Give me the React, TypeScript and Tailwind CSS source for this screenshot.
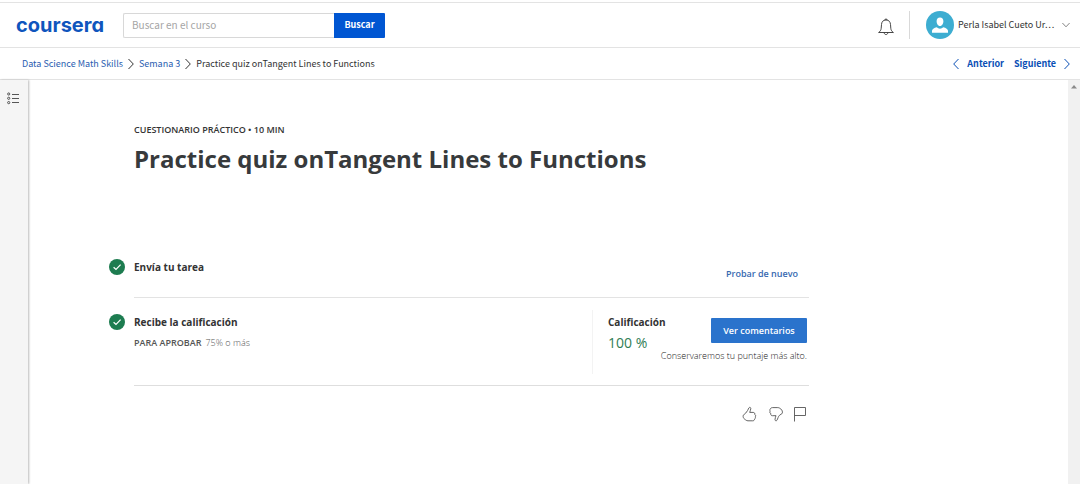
import type { ReactNode } from "react";

const sans = "font-['Open_Sans','Noto_Sans',sans-serif]";
const header = "font-['Noto_Sans_CJK_SC','Open_Sans',sans-serif]";

function Chevron({ className, flip = false }: { className: string; flip?: boolean }) {
  return (
    <svg viewBox="0 0 6 12" className={className} fill="none" stroke="currentColor" strokeWidth="1" aria-hidden="true">
      <path d={flip ? "M5.5 1 .7 6l4.8 5" : "M.5 1l4.8 5L.5 11"} />
    </svg>
  );
}

function CheckMark() {
  return (
    <svg viewBox="0 0 16 16" className="size-4 shrink-0" aria-label="Completado">
      <circle cx="8" cy="8" r="8" fill="#1d7c50" />
      <path d="M4.6 8.2l2.4 2.3 4.6-4.8" fill="none" stroke="#fff" strokeWidth="1.2" />
    </svg>
  );
}

function IconButton({ label, children }: { label: string; children: ReactNode }) {
  return (
    <button type="button" aria-label={label} className="text-[#555]">
      <svg viewBox="0 0 15 16" className="h-4 w-[15px]" fill="none" stroke="currentColor" strokeWidth="0.9" strokeLinejoin="round">
        {children}
      </svg>
    </button>
  );
}

function TopBar() {
  return (
    <header className={`mt-0.5 flex h-[46px] items-center border-y border-[#e3e3e3] pr-2.5 pl-4 ${header}`}>
      <a href="#inicio" className="w-[107px] font-['Inter',sans-serif] text-[20px] leading-6 font-bold text-[#0f55bd] [font-feature-settings:'cv11']">
        coursera
      </a>
      <form className="flex h-[25px]" onSubmit={(e) => e.preventDefault()}>
        <input
          type="text"
          aria-label="Buscar en el curso"
          placeholder="Buscar en el curso"
          className="w-[211px] rounded-l-[2px] border border-r-0 border-[#d8d8d8] px-2 text-[10px] leading-4 text-[#333] placeholder:text-[#a5a5a5]"
        />
        <button type="submit" className="w-[51px] rounded-r-[1px] bg-[#0056d2] text-[9px] leading-4 font-bold text-white">
          Buscar
        </button>
      </form>
      <div className="ml-auto flex items-center">
        <button type="button" aria-label="Notificaciones" className="mt-1 text-[#333]">
          <svg viewBox="0 0 16 18" className="h-[18px] w-4" fill="none" stroke="currentColor" strokeWidth="0.9" strokeLinejoin="round">
            <path d="M.6 14.5c1.5-1 2.4-2.3 2.6-4.2l.3-3.8C3.700 3.900 5 2 8 2s4.300 1.900 4.500 4.500l.3 3.800c.2 1.900 1.100 3.200 2.600 4.200z" />
            <path d="M6.800 2.100C6.800.6 9.200.6 9.200 2.100M6.200 14.600c0 2.600 3.600 2.600 3.600 0" />
          </svg>
        </button>
        <span className="ml-[15px] h-7 w-px bg-[#d9d9d9]" />
        <button type="button" className="ml-4 flex items-center text-[9px] leading-4 text-[#333]">
          <svg viewBox="0 0 28 28" className="size-7" aria-hidden="true">
            <circle cx="14" cy="14" r="14" fill="#3dadd1" />
            <path d="M14 6.500c2.200 0 3.400 1.500 3.400 3.700 0 2.300-1.400 4.800-3.400 4.800s-3.400-2.500-3.400-4.800c0-2.200 1.200-3.700 3.400-3.700zM6 21.800v-2c0-1.500 2-3 4.800-3.500.8.900 1.900 1.400 3.200 1.400s2.400-.5 3.200-1.400c2.800.5 4.800 2 4.800 3.500v2z" fill="#fff" />
          </svg>
          <span className="ml-1 w-[104px] text-left whitespace-nowrap">Perla Isabel Cueto Ur…</span>
          <svg viewBox="0 0 8 6" className="h-1.5 w-2" fill="none" stroke="#666" strokeWidth="0.8" aria-hidden="true">
            <path d="M.4 1L4 4.800 7.600 1" />
          </svg>
        </button>
      </div>
    </header>
  );
}

function Breadcrumbs() {
  return (
    <div className={`flex h-8 items-center justify-between border-b border-[#e3e3e3] pr-2.5 pl-[22px] text-[9px] leading-4 ${header}`}>
      <nav aria-label="Ruta" className="flex items-center gap-[5px] text-[#333]">
        <a href="#curso" className="text-[#2a5db0]">Data Science Math Skills</a>
        <Chevron className="h-3 w-1.5" />
        <a href="#semana-3" className="text-[#2a5db0]">Semana 3</a>
        <Chevron className="h-3 w-1.5" />
        <span>Practice quiz onTangent Lines to Functions</span>
      </nav>
      <nav aria-label="Lecciones" className="flex items-center gap-2.5 font-bold text-[#0a4fb5]">
        <a href="#anterior" className="flex items-center gap-2">
          <Chevron className="h-3 w-1.5" flip />
          Anterior
        </a>
        <a href="#siguiente" className="flex items-center gap-2">
          Siguiente
          <Chevron className="h-3 w-1.5" />
        </a>
      </nav>
    </div>
  );
}

function Sidebar() {
  return (
    <aside className="w-7 shrink-0 bg-[#f5f5f5] pt-3 pl-[7px] shadow-[1px_0_2px_#bbb]">
      <button type="button" aria-label="Contenido del curso" className="block text-[#444]">
        <svg viewBox="0 0 13 13" className="size-[13px]" fill="none" stroke="currentColor" strokeWidth="0.9">
          <circle cx="1.700" cy="2" r="1.100" />
          <circle cx="1.700" cy="6.300" r="1.100" />
          <circle cx="1.700" cy="10.600" r="1.100" />
          <path d="M5 2.500h7M5 6.500h7M5 10.500h7" />
        </svg>
      </button>
    </aside>
  );
}

function Quiz() {
  return (
    <main className="grow pt-11 pl-[81px] text-[#333]">
      <div className="w-full max-w-[700px]">
        <div className="pl-[25px]">
          <p className="text-[9px] leading-3 font-semibold">CUESTIONARIO PRÁCTICO • 10 MIN</p>
          <h1 className="mt-[7px] text-[24px] leading-8 font-bold text-[#373a3c]">Practice quiz onTangent Lines to Functions</h1>
        </div>

        <section className="mt-20 flex gap-[9px]">
          <div className="pt-1">
            <CheckMark />
          </div>
          <div className="flex h-[43px] grow justify-between border-b border-[#e3e3e3]">
            <h2 className="pt-1 text-[10px] leading-4 font-bold">Envía tu tarea</h2>
            <a href="#probar" className="mr-[11px] pt-[11px] text-[9px] leading-4 font-semibold text-[#3668b0]">Probar de nuevo</a>
          </div>
        </section>

        <section className="flex gap-[9px]">
          <div className="pt-4">
            <CheckMark />
          </div>
          <div className="flex h-[88px] grow border-b border-[#dedede]">
            <div className="grow pt-4">
              <h2 className="text-[10px] leading-4 font-bold">Recibe la calificación</h2>
              <p className="mt-[5px] flex gap-1 text-[9px] leading-4 text-[#555]">
                <span className="font-semibold">PARA APROBAR</span>
                <span className="font-light">75% o más</span>
              </p>
            </div>
            <div className="mt-3 flex h-16 w-[217px] shrink-0 justify-between border-l border-[#f3f3f3] pr-0.5 pl-[15px]">
              <div className="w-12 shrink-0 pt-1 whitespace-nowrap">
                <h3 className="text-[10px] leading-4 font-bold">Calificación</h3>
                <p className="mt-[3px] text-[14px] leading-5 text-[#2f7d55]">100 %</p>
              </div>
              <div className="flex flex-col items-end pt-2">
                <button type="button" className="h-[25px] w-24 rounded-[1px] bg-[#2a73cc] text-[9px] leading-4 font-semibold text-white">Ver comentarios</button>
                <p className="mt-[5px] text-[9px] leading-4 font-light whitespace-nowrap text-[#222]">Conservaremos tu puntaje más alto.</p>
              </div>
            </div>
          </div>
        </section>

        <div className="mt-5 flex justify-end gap-[11px]">
          <IconButton label="Me gusta">
            <path d="M1.200 9.300l2.600-2.300C5.300 5.700 6 3.400 6.900 1.900c.6-1 2-.5 1.900.6-.1 1.500-.7 2.600-1.100 3.900h3.500c1.300 0 1.900 1 1.400 1.900 1.200.5 1.400 1.800.6 2.600.5.900.1 1.800-.7 2.200 0 1.100-.7 1.700-1.800 1.700H6c-1.500 0-2.300-.9-3.300-1.600C1.300 12.300.900 10.700 1.200 9.300z" />
          </IconButton>
          <IconButton label="No me gusta">
            <path d="M2.200 3.100C2.700 2 3.600 1.600 4.600 1.600h5.200c1.500 0 2.200.9 3.300 1.600 1.200 1.100 1.500 2.600 1.200 4.100l-2.800 2C10.300 10.300 9.700 13 9 14.200c-.6 1-2 .6-2-.5 0-1.500.6-2.700 1-4H4.300c-1.300 0-1.800-1-1.300-2C1.800 7.200 1.400 6 2.200 5.200c-.5-.8-.4-1.600 0-2.100z" />
          </IconButton>
          <IconButton label="Informar un problema">
            <path d="M.5 15.500V1.500h11v8H.5" />
          </IconButton>
        </div>
      </div>
    </main>
  );
}

export default function App() {
  return (
    <div className={`flex min-h-screen flex-col bg-white ${sans}`}>
      <TopBar />
      <Breadcrumbs />
      <div className="flex grow">
        <Sidebar />
        <Quiz />
        <div className="flex w-3 shrink-0 justify-center bg-[#f1f1f1] pt-[5px]" aria-hidden="true">
          <svg viewBox="0 0 6 4" className="h-1 w-1.5">
            <path d="M3 0l3 3.500H0z" fill="#8a8a8a" />
          </svg>
        </div>
      </div>
    </div>
  );
}
